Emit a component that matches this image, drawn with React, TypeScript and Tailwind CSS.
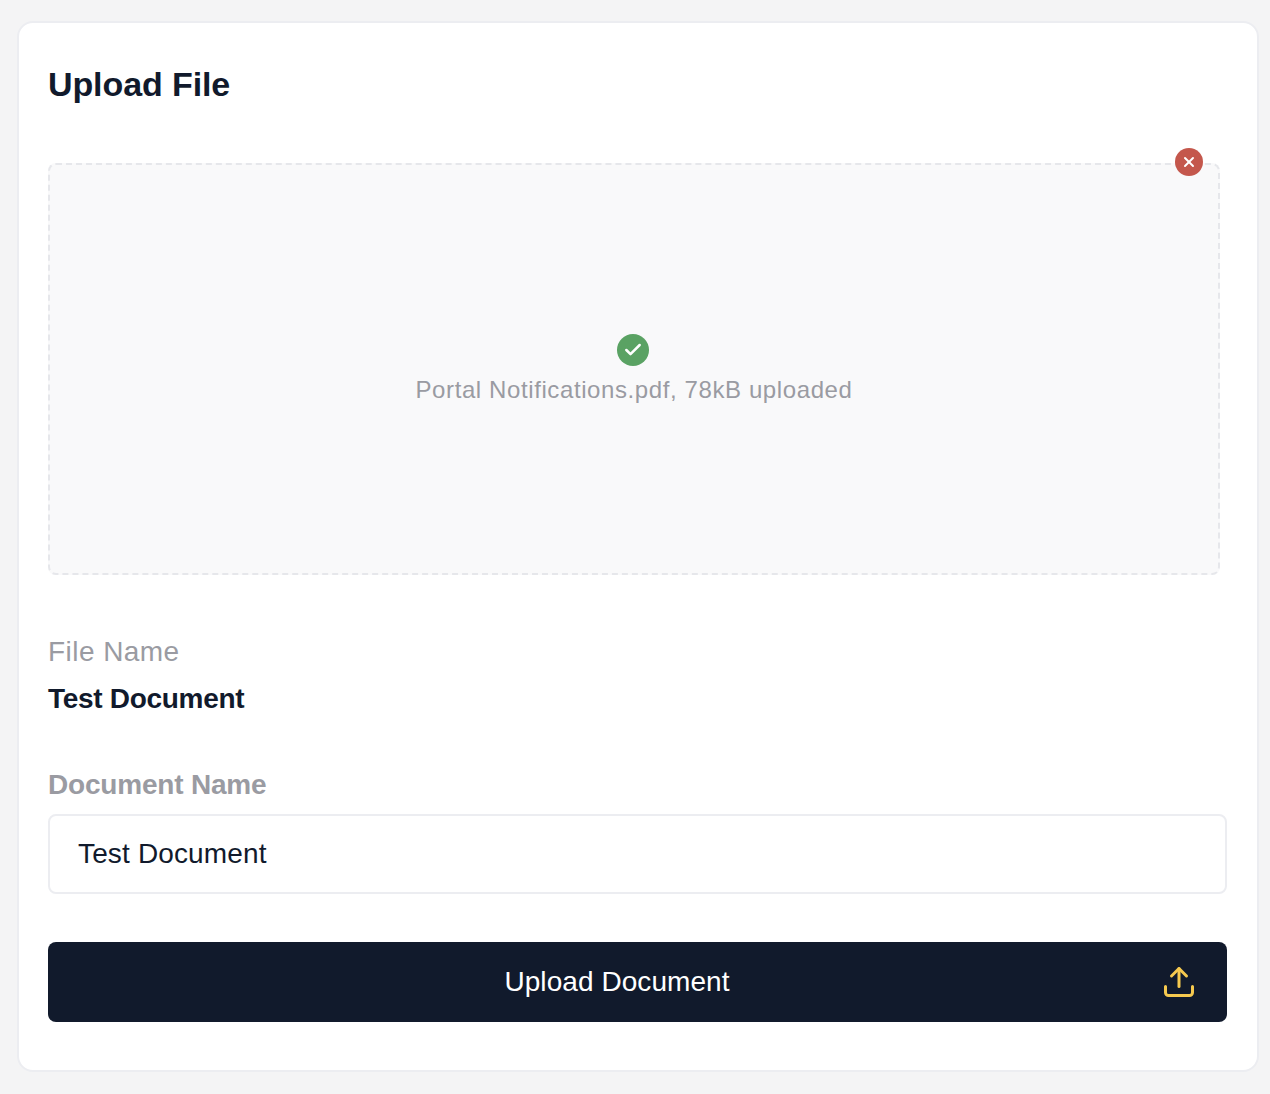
import { Check, Upload, X } from "lucide-react";

const font = { sans: "font-['Liberation_Sans',Arial,sans-serif]" };

export default function App() {
  return (
    <div className={`min-h-[1094px] bg-[#f4f4f5] pt-[21px] pr-[11px] pl-[17px] ${font.sans}`}>
      <div className="h-[1051px] rounded-[16px] border-2 border-[#ecedf1] bg-white pt-[38px] pr-[30px] pl-[29px]">
        <h1 className="text-[34px] leading-[46px] font-bold tracking-[-0.1px] text-[#111a2c]">Upload File</h1>

        <div className="relative mt-[56px] mr-[7px] flex h-[412px] flex-col items-center rounded-[8px] border-2 border-dashed border-[#e6e7eb] bg-[#f9f9fa] pt-[169px]">
          <button className="absolute -top-[17px] right-[15px] flex h-[28px] w-[28px] items-center justify-center rounded-full bg-[#c4574c]">
            <X className="h-[16px] w-[16px] text-white" strokeWidth={3} />
          </button>
          <div className="mr-[2px] flex h-[32px] w-[32px] items-center justify-center rounded-full bg-[#5aa263]">
            <Check className="h-[20px] w-[20px] text-white" strokeWidth={3} />
          </div>
          <div className="mt-[9px] text-[24px] leading-[30px] tracking-[0.6px] text-[#9a9ba2]">
            Portal Notifications.pdf, 78kB uploaded
          </div>
        </div>

        <div className="mt-[58px] text-[28px] leading-[38px] tracking-[0.45px] text-[#9a9ba2]">File Name</div>
        <div className="mt-[9px] text-[28px] leading-[38px] font-bold tracking-[-0.3px] text-[#111a2c]">Test Document</div>

        <div className="mt-[48px] text-[28px] leading-[38px] font-bold tracking-[-0.2px] text-[#9a9ba2]">Document Name</div>
        <input
          readOnly
          value="Test Document"
          className="mt-[10px] block h-[80px] w-full rounded-[8px] border-2 border-[#ecedf1] bg-white px-[28px] text-[28px] tracking-[0.15px] text-[#111a2c] outline-none"
        />

        <button className="relative mt-[48px] flex h-[80px] w-full items-center justify-center rounded-[8px] bg-[#111a2c] pr-[41px] text-[28px] tracking-[0.07px] text-white">
          Upload Document
          <Upload className="absolute top-[22px] right-[30px] h-[36px] w-[36px] text-[#f6c94f]" strokeWidth={2} />
        </button>
      </div>
    </div>
  );
}
